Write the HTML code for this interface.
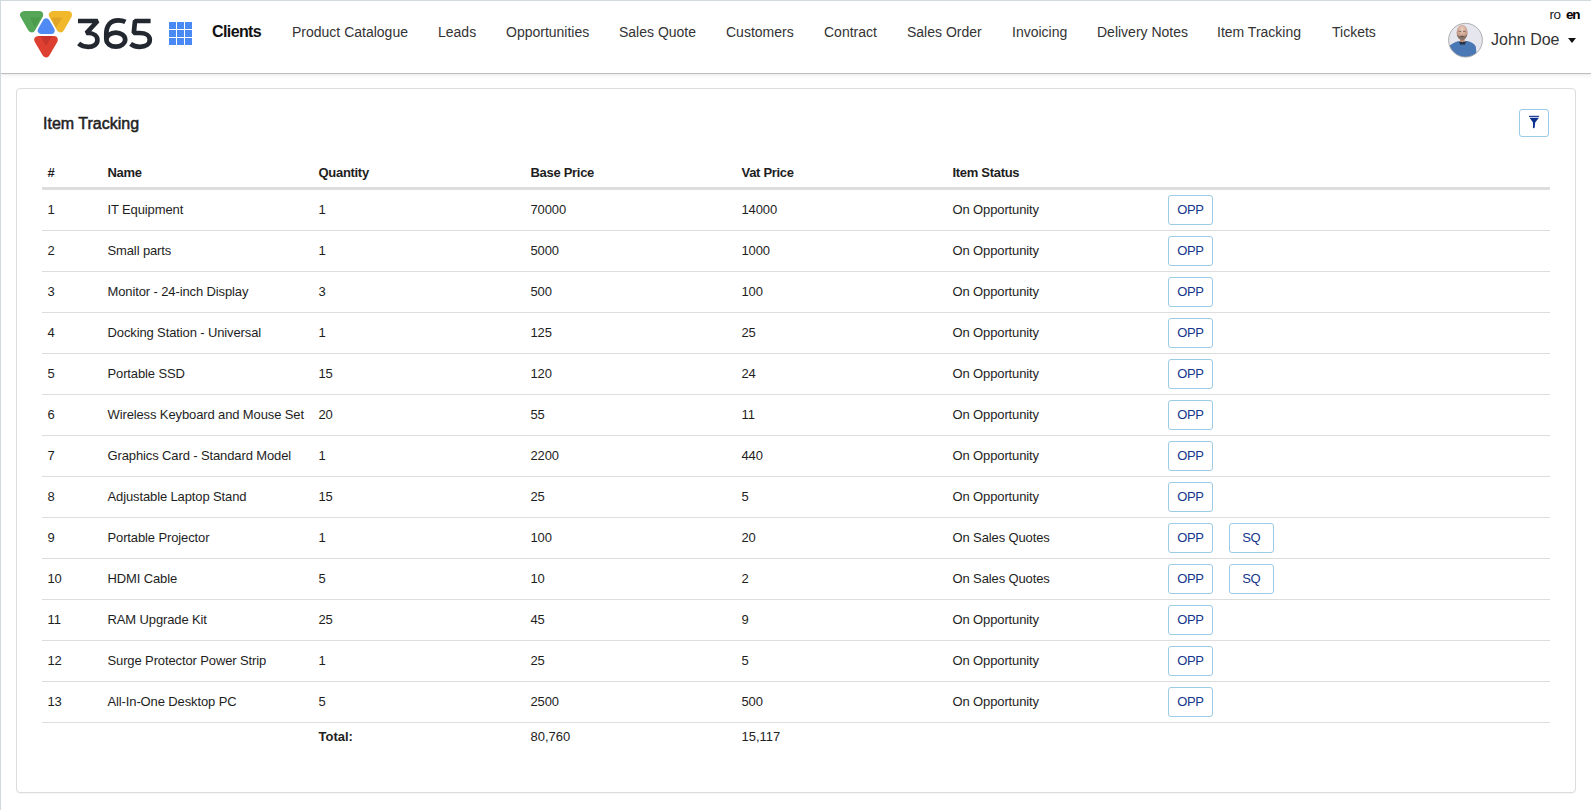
<!DOCTYPE html>
<html><head><meta charset="utf-8">
<style>
*{box-sizing:border-box;margin:0;padding:0}
html,body{width:1591px;height:810px;overflow:hidden;background:#fff}
body{font-family:"Liberation Sans",sans-serif;position:relative;border-top:1px solid #d1d9dc;border-left:1px solid #d1d9dc}
.hdr{position:absolute;left:0;top:0;width:1591px;height:73px;background:#fff;border-bottom:1px solid #bdbdbd;box-shadow:0 1px 4px rgba(0,0,0,.10)}
.logo{position:absolute;left:19px;top:9px}
.num{position:absolute;left:76px;top:8px;font-size:43px;color:#22262e;font-weight:bold;letter-spacing:0px}
.grid{position:absolute;left:168px;top:21px;width:23px;height:23px}
.nav{position:absolute;top:0;left:0;height:64px;font-size:14px;color:#333}
.nav span{position:absolute;top:23px;white-space:nowrap}
.nav .b{font-weight:bold;font-size:16px;color:#111;top:22px}
.lang{position:absolute;top:6px;font-size:13.5px;color:#222}
.user{position:absolute;left:1490px;top:30px;font-size:16px;color:#333}
.avatar{position:absolute;left:1448px;top:23px;width:35px;height:35px;border-radius:50%;overflow:hidden;border:1px solid #9a9a9a}
.caret{position:absolute;left:1567px;top:37px;width:0;height:0;border-left:4px solid transparent;border-right:4px solid transparent;border-top:5px solid #111}
.card{position:absolute;left:15px;top:87px;width:1560px;height:705px;border:1px solid #dcdcdc;border-radius:4px;background:#fff;box-shadow:0 1px 1px rgba(0,0,0,.04)}
.title{position:absolute;left:42px;top:114px;font-size:16px;color:#222;-webkit-text-stroke:0.5px #222}
.fbtn{position:absolute;left:1518px;top:108px;width:30px;height:28px;border:1px solid #9ccbe6;border-radius:3px}
.tbl{position:absolute;left:41px;top:148px;width:1508px}
.row{position:relative;height:41px;border-top:1px solid #dddddd;font-size:13px;color:#1e1e1e;letter-spacing:-0.12px}
.row span{position:absolute;top:12px;white-space:nowrap}
.thead{height:40px;border-top:none;border-bottom:2px solid #dddddd;font-weight:bold;letter-spacing:-0.3px}
.thead span{top:16px}
.c0{left:5.5px}.c1{left:65.5px}.c2{left:276.5px}.c3{left:488.5px}.c4{left:699.5px}.c5{left:910.5px}
.btn{position:absolute;top:5px;height:30px;width:45px;border:1px solid #9ccbe6;border-radius:3px;font-size:13px;color:#15378c;text-align:center;line-height:28px;letter-spacing:-0.4px;text-indent:-0.4px}
.b1{left:1126px}.b2{left:1187px}
.total{border-top:1px solid #dddddd;height:30px;font-size:13px;position:relative;color:#222}
.total span{position:absolute;top:6px}
</style></head><body>
<div class="hdr">
  <svg style="position:absolute;left:-1px;top:-1px" width="160" height="62" viewBox="0 0 160 62">
    <g stroke-linejoin="round" stroke-width="8">
      <polygon points="24.1,15.1 39.2,15.1 31.65,28.2" fill="#55a757" stroke="#55a757"/>
      <polygon points="52.9,15.1 68,15.1 60.45,28.2" fill="#f2b82c" stroke="#f2b82c"/>
      <polygon points="41.2,30.4 51.2,30.4 46.2,21.8" fill="#4f8af5" stroke="#4f8af5" stroke-width="7"/>
      <polygon points="38.3,39.9 53.8,39.9 46.05,53.3" fill="#dd4030" stroke="#dd4030"/>
    </g>
    <polygon points="30,17.6 40.8,17.6 34.8,27.6" fill="#4c9a4c"/>
    <polygon points="51,17.6 62.5,17.6 56,27.6" fill="#dea526"/>
    <polygon points="40.2,36.1 52.2,36.1 46,45.8" fill="#c8352d"/>
    <g fill="none" stroke="#232730" stroke-width="4.7" stroke-miterlimit="1.2">
      <path d="M78 21 H97.6 L86.4 33 H88.3 C93.8 33 97.4 36 97.4 40 C97.4 44.3 93.6 46.8 88.2 46.8 C84.5 46.8 81 45.5 78.6 43.5"/>
      <path d="M125.4 21.8 C123.5 20.8 121 20.3 118.2 20.3 C110.5 20.3 106.3 25.5 106.3 34 V39.6"/>
      <ellipse cx="115.8" cy="39.6" rx="9.4" ry="7.0"/>
      <path d="M150.6 21 H135 L133.8 33 H139.5 C146 33 149.8 35.8 149.8 39.8 C149.8 44 145.8 46.8 139.8 46.8 C136.3 46.8 133 45.7 130.6 43.8"/>
    </g>
  </svg>
  <svg class="grid" width="23" height="23" viewBox="0 0 23 23" fill="#4a89f3">
    <rect x="0" y="0" width="7" height="7"/><rect x="8" y="0" width="7" height="7"/><rect x="16" y="0" width="7" height="7"/>
    <rect x="0" y="8" width="7" height="7"/><rect x="8" y="8" width="7" height="7"/><rect x="16" y="8" width="7" height="7"/>
    <rect x="0" y="16" width="7" height="7"/><rect x="8" y="16" width="7" height="7"/><rect x="16" y="16" width="7" height="7"/>
  </svg>
  <div class="nav">
    <span class="b" style="left:211px;letter-spacing:-0.6px">Clients</span>
    <span style="left:291px">Product Catalogue</span>
    <span style="left:437px">Leads</span>
    <span style="left:505px">Opportunities</span>
    <span style="left:618px">Sales Quote</span>
    <span style="left:725px">Customers</span>
    <span style="left:823px">Contract</span>
    <span style="left:906px">Sales Order</span>
    <span style="left:1011px">Invoicing</span>
    <span style="left:1096px">Delivery Notes</span>
    <span style="left:1216px">Item Tracking</span>
    <span style="left:1331px">Tickets</span>
  </div>
  <span class="lang" style="left:1548.5px;letter-spacing:-0.4px">ro</span>
  <span class="lang" style="left:1565px;font-weight:bold;color:#000;letter-spacing:-1.2px">en</span>
  <svg style="position:absolute;left:1446px;top:21px" width="37" height="37" viewBox="0 0 37 37">
    <defs><clipPath id="cc"><circle cx="18.5" cy="18.2" r="16.8"/></clipPath>
    <radialGradient id="sk" cx="0.5" cy="0.3" r="0.65"><stop offset="0" stop-color="#ecd0c2"/><stop offset="1" stop-color="#b88a74"/></radialGradient></defs>
    <g clip-path="url(#cc)">
      <rect width="37" height="37" fill="#e6e6ef"/>
      <path d="M0 37 L1.5 25 C3 22.5 7 20.5 11 19.2 L15 20.5 L20 19 C24 20 27.5 21.5 28.8 24.5 L30 37 Z" fill="#4a78b5"/>
      <path d="M11.5 19.3 L13.8 23.2 L15.2 22.2 L17.4 23 L19.6 19.1 L15.2 20.2 Z" fill="#24324a"/>
      <rect x="13" y="15" width="4.6" height="5" fill="#b78a76"/>
      <ellipse cx="15.1" cy="10.2" rx="5.5" ry="7.4" fill="url(#sk)"/>
      <path d="M9.8 11.8 C10.2 15.5 12.2 18 15.1 18 C18 18 20 15.5 20.4 11.8 C19.6 13.6 18 14.3 15.1 14.3 C12.2 14.3 10.6 13.6 9.8 11.8 Z" fill="#85736b"/>
      <path d="M12.6 14.3 Q15.1 13.2 17.6 14.3 Q15.1 15.1 12.6 14.3Z" fill="#4a3833"/>
      <rect x="11.6" y="8.8" width="2.6" height="1.1" fill="#6a5048" opacity=".7"/><rect x="16" y="8.8" width="2.6" height="1.1" fill="#6a5048" opacity=".7"/>
    </g>
    <circle cx="18.5" cy="18.2" r="16.9" fill="none" stroke="#a5a5a5" stroke-width="0.9"/>
  </svg>
  <span class="user">John Doe</span>
  <div class="caret"></div>
</div>
<div class="card"></div>
<div class="title">Item Tracking</div>
<div class="fbtn"></div>
<svg style="position:absolute;left:1519px;top:109px" width="28" height="26" viewBox="1520 110 28 26"><rect x="1529" y="115.8" width="10.1" height="1.1" fill="#0b2f8f"/><path d="M1529.6 117.8 H1538.9 L1535.2 122.5 L1534.6 127.9 L1533 128.2 L1533 122.5 Z" fill="#0b2f8f"/></svg>
<div class="tbl">
  <div class="row thead"><span class="c0">#</span><span class="c1">Name</span><span class="c2">Quantity</span><span class="c3">Base Price</span><span class="c4">Vat Price</span><span class="c5">Item Status</span></div>
<div class="row"><span class="c0">1</span><span class="c1">IT Equipment</span><span class="c2">1</span><span class="c3">70000</span><span class="c4">14000</span><span class="c5">On Opportunity</span><div class="btn b1">OPP</div></div>
<div class="row"><span class="c0">2</span><span class="c1">Small parts</span><span class="c2">1</span><span class="c3">5000</span><span class="c4">1000</span><span class="c5">On Opportunity</span><div class="btn b1">OPP</div></div>
<div class="row"><span class="c0">3</span><span class="c1">Monitor - 24-inch Display</span><span class="c2">3</span><span class="c3">500</span><span class="c4">100</span><span class="c5">On Opportunity</span><div class="btn b1">OPP</div></div>
<div class="row"><span class="c0">4</span><span class="c1">Docking Station - Universal</span><span class="c2">1</span><span class="c3">125</span><span class="c4">25</span><span class="c5">On Opportunity</span><div class="btn b1">OPP</div></div>
<div class="row"><span class="c0">5</span><span class="c1">Portable SSD</span><span class="c2">15</span><span class="c3">120</span><span class="c4">24</span><span class="c5">On Opportunity</span><div class="btn b1">OPP</div></div>
<div class="row"><span class="c0">6</span><span class="c1">Wireless Keyboard and Mouse Set</span><span class="c2">20</span><span class="c3">55</span><span class="c4">11</span><span class="c5">On Opportunity</span><div class="btn b1">OPP</div></div>
<div class="row"><span class="c0">7</span><span class="c1">Graphics Card - Standard Model</span><span class="c2">1</span><span class="c3">2200</span><span class="c4">440</span><span class="c5">On Opportunity</span><div class="btn b1">OPP</div></div>
<div class="row"><span class="c0">8</span><span class="c1">Adjustable Laptop Stand</span><span class="c2">15</span><span class="c3">25</span><span class="c4">5</span><span class="c5">On Opportunity</span><div class="btn b1">OPP</div></div>
<div class="row"><span class="c0">9</span><span class="c1">Portable Projector</span><span class="c2">1</span><span class="c3">100</span><span class="c4">20</span><span class="c5">On Sales Quotes</span><div class="btn b1">OPP</div><div class="btn b2">SQ</div></div>
<div class="row"><span class="c0">10</span><span class="c1">HDMI Cable</span><span class="c2">5</span><span class="c3">10</span><span class="c4">2</span><span class="c5">On Sales Quotes</span><div class="btn b1">OPP</div><div class="btn b2">SQ</div></div>
<div class="row"><span class="c0">11</span><span class="c1">RAM Upgrade Kit</span><span class="c2">25</span><span class="c3">45</span><span class="c4">9</span><span class="c5">On Opportunity</span><div class="btn b1">OPP</div></div>
<div class="row"><span class="c0">12</span><span class="c1">Surge Protector Power Strip</span><span class="c2">1</span><span class="c3">25</span><span class="c4">5</span><span class="c5">On Opportunity</span><div class="btn b1">OPP</div></div>
<div class="row"><span class="c0">13</span><span class="c1">All-In-One Desktop PC</span><span class="c2">5</span><span class="c3">2500</span><span class="c4">500</span><span class="c5">On Opportunity</span><div class="btn b1">OPP</div></div>
<div class="total"><span class="c2" style="font-weight:bold">Total:</span><span class="c3">80,760</span><span class="c4">15,117</span></div>
</div>
</body></html>
